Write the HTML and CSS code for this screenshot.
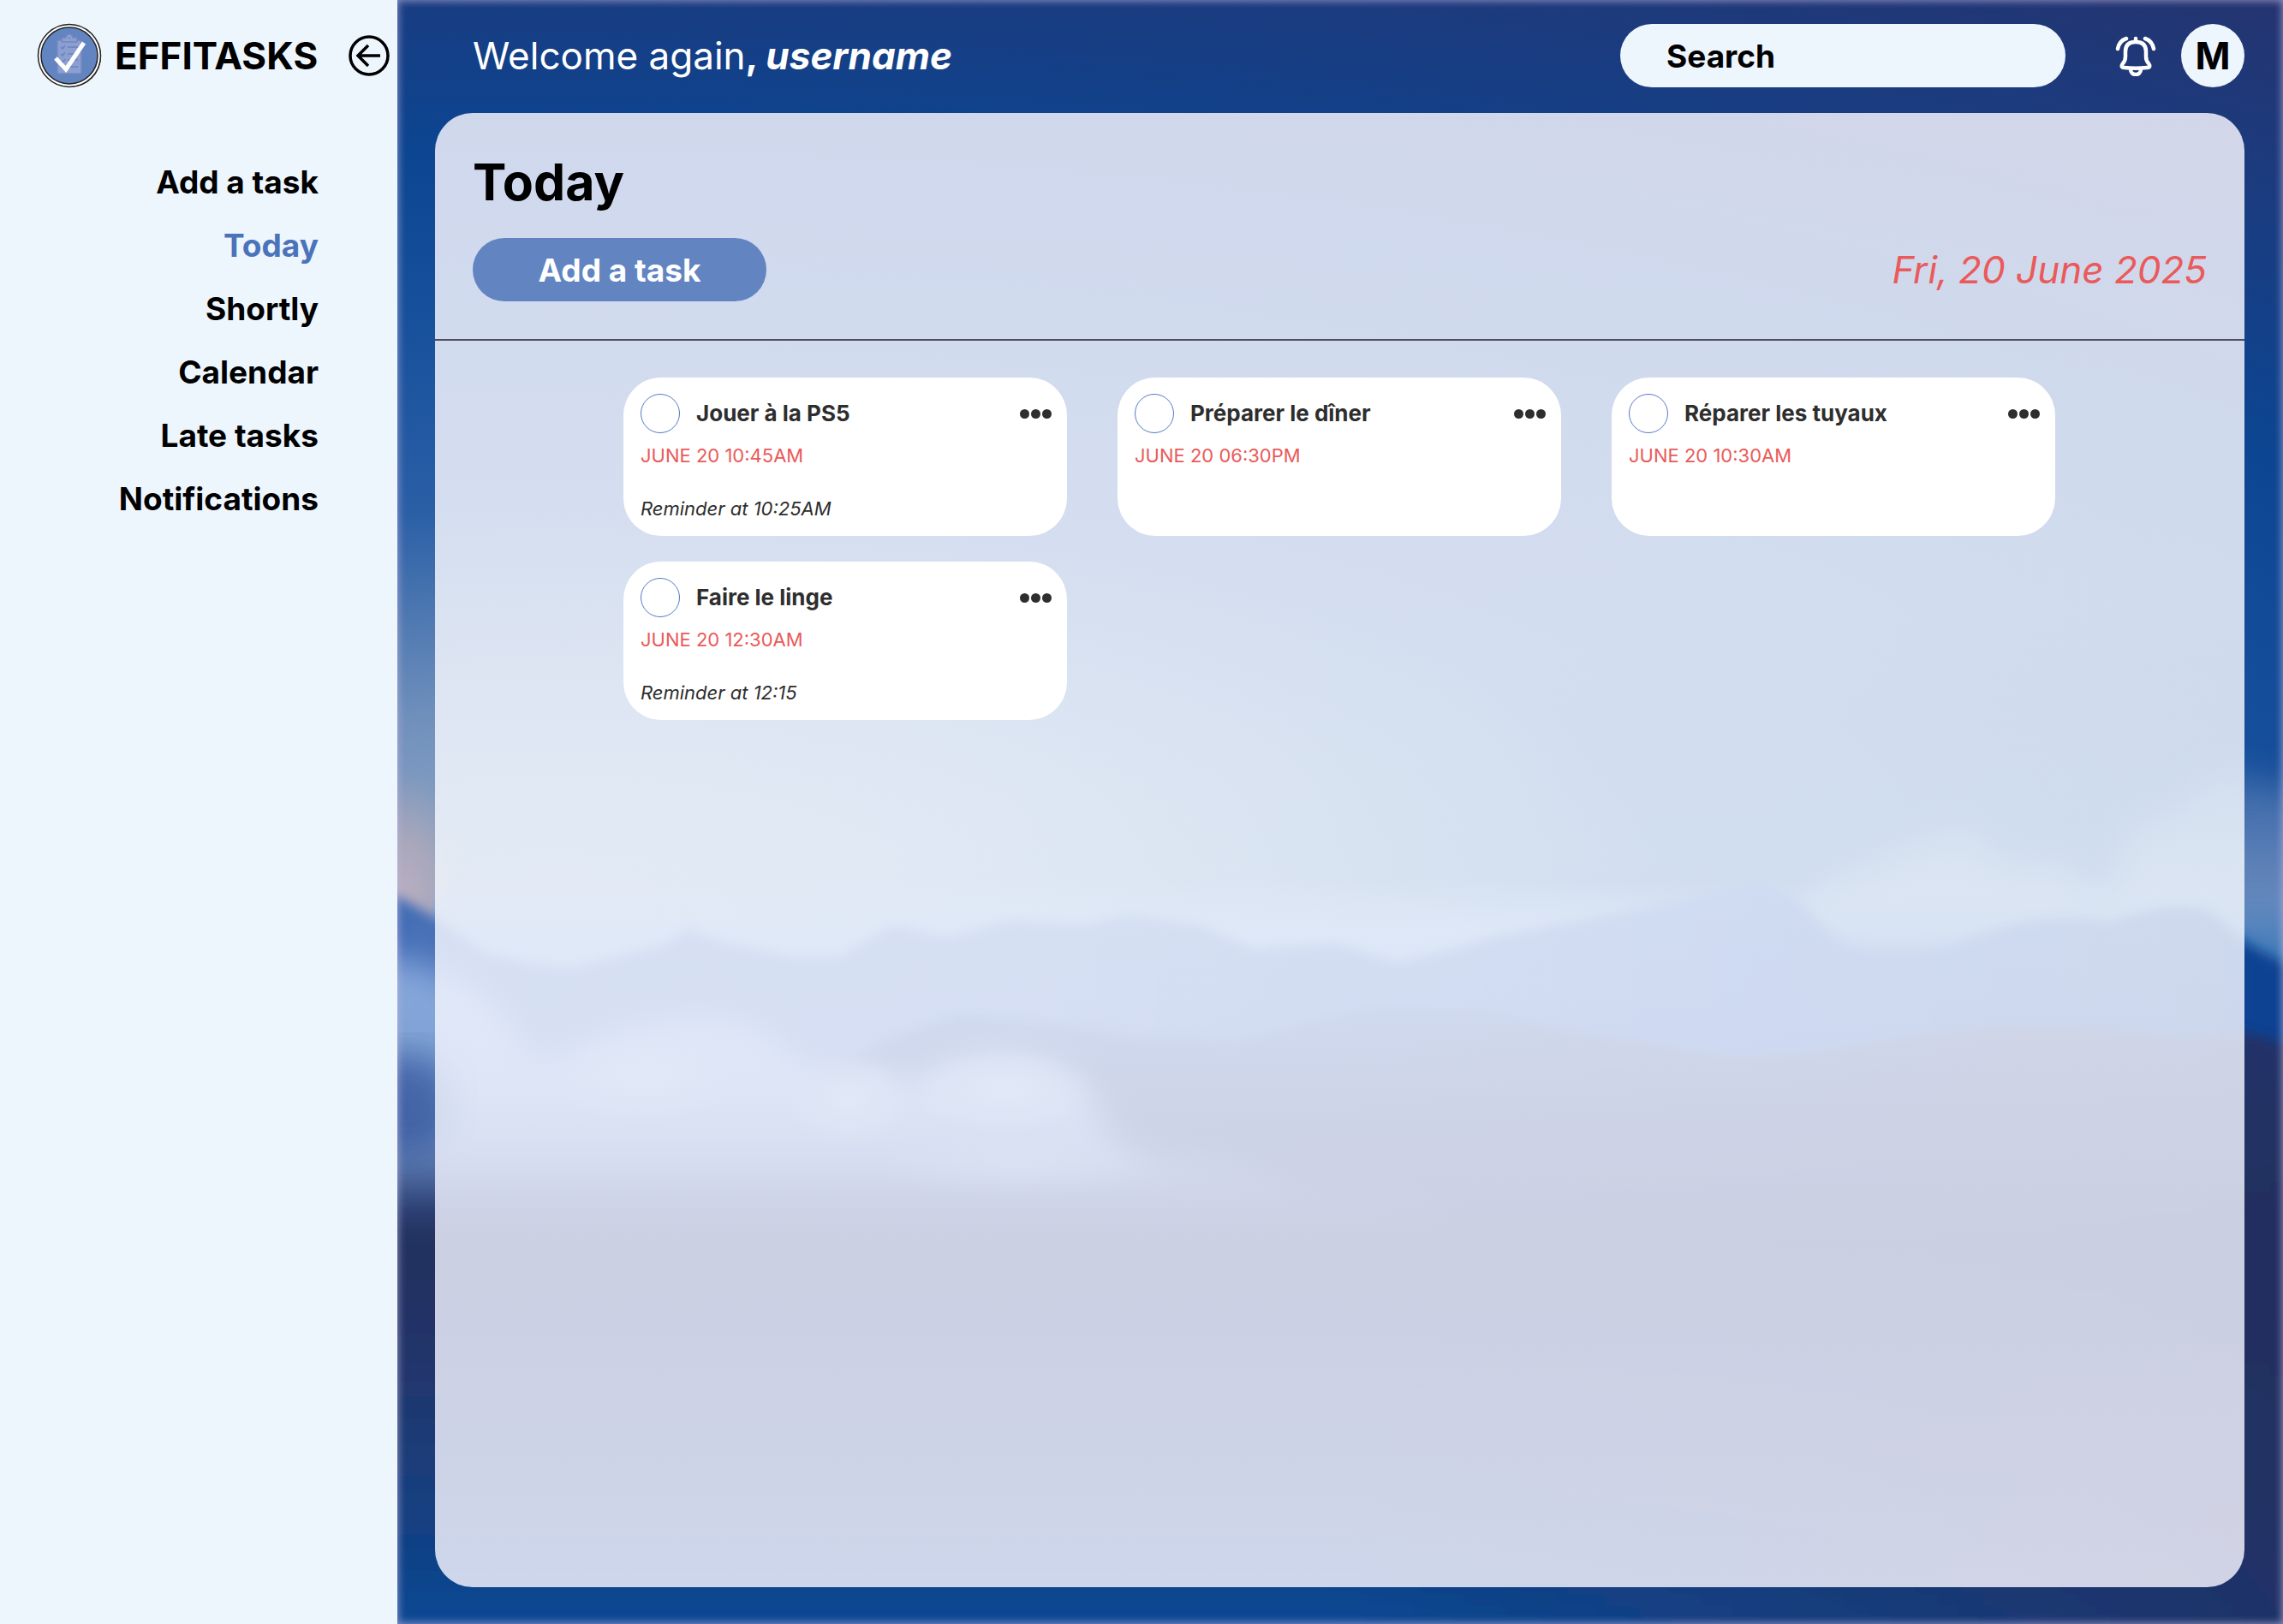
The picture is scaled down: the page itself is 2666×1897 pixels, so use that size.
FILE: index.html
```html
<!DOCTYPE html>
<html lang="en">
<head>
<meta charset="utf-8">
<meta name="viewport" content="width=device-width, initial-scale=1">
<title>Effitasks – Today</title>
<link rel="stylesheet" href="styles.css">
</head>
<body>
<aside class="sidebar">
  <div class="brand">
    <svg class="brand-logo" viewBox="0 0 76 76" aria-hidden="true">
      <circle cx="39" cy="39" r="36" fill="#222"/>
      <circle cx="38" cy="38" r="36.500" fill="#fff" stroke="#222" stroke-width="1.500"/>
      <circle cx="38" cy="38" r="33" fill="#6285c2" stroke="#222" stroke-width="1.500"/>
      <g fill="#8c9fd3" stroke="#7488bd" stroke-width="1.500" stroke-linejoin="round">
        <rect x="24" y="20" width="28" height="39" rx="1"/>
        <path d="M29 22v-4q0-1 1-1h4q1-4 4-4t4 4h4q1 0 1 1v4z"/>
      </g>
      <path d="M28 28l2 2 3-4M28 36l2 2 3-4M28 44l2 2 3-4M28 51l2 2 3-4M36 28h12M36 36h12M36 43h12M36 51h12" fill="none" stroke="#6f83b8" stroke-width="1.500"/>
      <circle cx="38" cy="17.500" r="1" fill="#6f83b8"/>
      <path d="M22 41L34 54L55 23" fill="none" stroke="#fff" stroke-width="5"/>
    </svg>
    <span class="brand-name">EFFITASKS</span>
    <button class="collapse" type="button" aria-label="Collapse menu">
      <svg viewBox="0 0 48 48" fill="none" stroke="#000" stroke-width="3.500" aria-hidden="true">
        <circle cx="24" cy="24" r="22"/>
        <path d="M37 24H11M23 12L11 24l12 12"/>
      </svg>
    </button>
  </div>
  <nav class="nav">
    <a href="#add">Add a task</a>
    <a class="active" href="#today" aria-current="page">Today</a>
    <a href="#shortly">Shortly</a>
    <a href="#calendar">Calendar</a>
    <a href="#late">Late tasks</a>
    <a href="#notifications">Notifications</a>
  </nav>
</aside>

<main class="main">
  <svg class="scene" viewBox="464 0 2202 1897" preserveAspectRatio="none" aria-hidden="true">
    <defs>
      <radialGradient id="sky" gradientUnits="userSpaceOnUse" cx="0" cy="0" r="1400" gradientTransform="translate(650 1070) scale(2.8 1)">
        <stop offset="0" stop-color="#93a8c8"/>
        <stop offset=".06" stop-color="#8ba3c4"/>
        <stop offset=".17" stop-color="#7090bc"/>
        <stop offset=".34" stop-color="#2a5fa6"/>
        <stop offset=".5" stop-color="#17509c"/>
        <stop offset=".64" stop-color="#0c4591"/>
        <stop offset=".78" stop-color="#1a3c80"/>
        <stop offset="1" stop-color="#2a3068"/>
      </radialGradient>
      <radialGradient id="glow">
        <stop offset="0" stop-color="#bcb0c2"/>
        <stop offset=".5" stop-color="#b3a9b8" stop-opacity=".7"/>
        <stop offset="1" stop-color="#a8a4b4" stop-opacity="0"/>
      </radialGradient>
      <linearGradient id="haze" x1="0" y1="0" x2="0" y2="1">
        <stop offset="0" stop-color="#8fb0e0" stop-opacity="0"/>
        <stop offset=".45" stop-color="#84a6dc" stop-opacity=".75"/>
        <stop offset="1" stop-color="#6a9fd2"/>
      </linearGradient>
      <linearGradient id="far" x1="0" y1="0" x2="1" y2="0">
        <stop offset="0" stop-color="#436db5"/>
        <stop offset=".06" stop-color="#4a72b8"/>
        <stop offset=".35" stop-color="#446db6"/>
        <stop offset=".7" stop-color="#1f52b0"/>
        <stop offset="1" stop-color="#0f4190"/>
      </linearGradient>
      <linearGradient id="near" gradientUnits="userSpaceOnUse" x1="0" y1="1180" x2="0" y2="1897">
        <stop offset="0" stop-color="#214d9c"/>
        <stop offset=".17" stop-color="#203c7c"/>
        <stop offset=".38" stop-color="#22305d"/>
        <stop offset=".56" stop-color="#22346a"/>
        <stop offset=".74" stop-color="#1b3d79"/>
        <stop offset=".87" stop-color="#104185"/>
        <stop offset="1" stop-color="#0a4894"/>
      </linearGradient>
      <linearGradient id="shade" x1="0" y1="0" x2="1" y2="0">
        <stop offset=".5" stop-color="#242e5e" stop-opacity="0"/>
        <stop offset="1" stop-color="#242e5e" stop-opacity=".85"/>
      </linearGradient>
      <linearGradient id="cloud" gradientUnits="userSpaceOnUse" x1="0" y1="1110" x2="0" y2="1435">
        <stop offset="0" stop-color="#8aa9de"/>
        <stop offset=".5" stop-color="#7b9fd0"/>
        <stop offset=".76" stop-color="#6686ba" stop-opacity=".9"/>
        <stop offset="1" stop-color="#3c5590" stop-opacity="0"/>
      </linearGradient>
      <linearGradient id="cloudRight" gradientUnits="userSpaceOnUse" x1="0" y1="900" x2="0" y2="1120">
        <stop offset="0" stop-color="#5a7eb6" stop-opacity=".5"/>
        <stop offset=".6" stop-color="#7391c0" stop-opacity=".85"/>
        <stop offset="1" stop-color="#3a78b8"/>
      </linearGradient>
      <filter id="soft"><feGaussianBlur stdDeviation="7"/></filter>
      <filter id="softer" x="-20%" y="-20%" width="140%" height="140%"><feGaussianBlur stdDeviation="20"/></filter>
      <radialGradient id="puff">
        <stop offset="0" stop-color="#9abbd8" stop-opacity=".8"/>
        <stop offset="1" stop-color="#9abbd8" stop-opacity="0"/>
      </radialGradient>
    </defs>
    <rect x="464" width="2202" height="1897" fill="url(#sky)"/>
    <ellipse cx="470" cy="1050" rx="80" ry="150" fill="url(#glow)"/>
    <rect x="504" y="1030" width="2162" height="120" fill="url(#haze)"/>
    <path filter="url(#softer)" fill="url(#cloudRight)" d="M2080 1120L2110 1050Q2150 1010 2190 1015Q2220 970 2260 985Q2290 940 2320 990Q2350 1020 2380 1005Q2430 1010 2450 1050Q2470 1030 2480 980Q2510 950 2540 950Q2580 890 2640 910L2700 930V1150H2080Z"/>
    <path filter="url(#soft)" fill="url(#far)" d="M440 1040L466 1048L508 1071L566 1113Q620 1128 670 1131L779 1102L802 1084L842 1100L928 1118L980 1118L1043 1080L1106 1095L1180 1075L1267 1080L1318 1068L1400 1080L1462 1108L1560 1102L1632 1124L1700 1108L1751 1093L1910 1063L2021 1036Q2065 1022 2098 1050L2142 1093Q2160 1108 2200 1108L2270 1106L2352 1080Q2418 1066 2463 1078Q2550 1046 2590 1070Q2610 1100 2666 1123L2700 1130V1500H440Z"/>
    <g filter="url(#soft)">
      <path fill="url(#near)" d="M440 1290L900 1280L1037 1215L1123 1186L1220 1196L1335 1212L1450 1216L1530 1195L1600 1180L1734 1182L1800 1196L1910 1213L2021 1235L2110 1230L2198 1216L2336 1195L2463 1203L2557 1215L2628 1206L2700 1230V1930H440Z"/>
      <path fill="url(#shade)" d="M440 1290L900 1280L1037 1215L1123 1186L1220 1196L1335 1212L1450 1216L1530 1195L1600 1180L1734 1182L1800 1196L1910 1213L2021 1235L2110 1230L2198 1216L2336 1195L2463 1203L2557 1215L2628 1206L2700 1230V1930H440Z"/>
    </g>
    <path filter="url(#softer)" fill="url(#cloud)" d="M400 1110Q500 1120 550 1155Q600 1190 630 1240Q700 1200 760 1195Q830 1175 900 1205Q940 1240 960 1250Q1010 1230 1060 1262Q1120 1225 1180 1230Q1260 1240 1290 1310Q1310 1355 1380 1355Q1460 1365 1520 1385Q1640 1390 1780 1440H400Z"/>
    <ellipse cx="474" cy="1290" rx="60" ry="60" fill="#2f5098" fill-opacity=".7" filter="url(#softer)"/>
    <ellipse cx="750" cy="1260" rx="110" ry="50" fill="url(#puff)"/>
    <ellipse cx="990" cy="1285" rx="70" ry="55" fill="url(#puff)"/>
    <ellipse cx="1175" cy="1275" rx="110" ry="50" fill="url(#puff)"/>
    <ellipse cx="1190" cy="1360" rx="170" ry="40" fill="url(#puff)" opacity=".5"/>
  </svg>

  <header class="topbar">
    <p class="welcome">Welcome again<b>, <i>username</i></b></p>
    <input class="search" type="search" placeholder="Search" aria-label="Search">
    <button class="bell" type="button" aria-label="Notifications">
      <svg viewBox="0 0 48 48" fill="none" stroke="#fff" stroke-width="4.500" stroke-linecap="round" stroke-linejoin="round" aria-hidden="true">
        <path d="M24 4v3M24 8c-8 0-12 4-12 11v6c0 4-1 6-3 8-2 3-2 5 2 5 8 1 18 1 26 0 4 0 4-2 2-5-2-2-3-4-3-8v-6c0-7-4-11-12-11z"/>
        <path d="M18 40c0 4 3 6 6 6s6-2 6-6M13 4C7 6 4 11 3 16M35 4c6 2 9 7 10 12"/>
      </svg>
    </button>
    <button class="avatar" type="button" aria-label="Account">M</button>
  </header>

  <section class="panel">
    <div class="panel-head">
      <h1>Today</h1>
      <div class="panel-row">
        <button class="add" type="button">Add a task</button>
        <time class="date" datetime="2025-06-20">Fri, 20 June 2025</time>
      </div>
    </div>
    <div class="cards">
      <article class="card">
        <div class="card-top">
          <input type="checkbox" id="t1"><label for="t1">Jouer à la PS5</label>
          <button class="more" type="button" aria-label="More options"><span></span><span></span><span></span></button>
        </div>
        <p class="due">JUNE 20 10:45AM</p>
        <p class="reminder">Reminder at 10:25AM</p>
      </article>
      <article class="card">
        <div class="card-top">
          <input type="checkbox" id="t2"><label for="t2">Préparer le dîner</label>
          <button class="more" type="button" aria-label="More options"><span></span><span></span><span></span></button>
        </div>
        <p class="due">JUNE 20 06:30PM</p>
      </article>
      <article class="card">
        <div class="card-top">
          <input type="checkbox" id="t3"><label for="t3">Réparer les tuyaux</label>
          <button class="more" type="button" aria-label="More options"><span></span><span></span><span></span></button>
        </div>
        <p class="due">JUNE 20 10:30AM</p>
      </article>
      <article class="card">
        <div class="card-top">
          <input type="checkbox" id="t4"><label for="t4">Faire le linge</label>
          <button class="more" type="button" aria-label="More options"><span></span><span></span><span></span></button>
        </div>
        <p class="due">JUNE 20 12:30AM</p>
        <p class="reminder">Reminder at 12:15</p>
      </article>
    </div>
  </section>
</main>
</body>
</html>
```
FILE: styles.css
```css
* { box-sizing: border-box; margin: 0; }

body {
  display: grid;
  grid-template-columns: 464px 1fr;
  min-height: 100vh;
  font-family: Inter, "Liberation Sans", sans-serif;
  font-size: 37px;
  color: #000;
  background: #edf5fd;
}

button, input { font: inherit; color: inherit; border: 0; padding: 0; background: none; }
button { cursor: pointer; }
svg { display: block; }
a { color: inherit; text-decoration: none; }

/* Sidebar */
.sidebar { padding-top: 28px; background: #edf5fd; }
.brand { display: flex; align-items: center; height: 74px; padding: 0 9px 0 43px; }
.brand-logo { width: 76px; height: 76px; overflow: visible; flex: none; }
.brand-name { margin-left: 15px; font-size: 44px; font-weight: 700; }
.collapse { width: 48px; height: 48px; margin-left: auto; }
.nav {
  display: flex;
  flex-direction: column;
  margin-top: 74px;
  padding-right: 92px;
  text-align: right;
  font-weight: 700;
  line-height: 74px;
}
.nav .active { color: #4b73b9; }

/* Main area with the landscape behind it */
.main { position: relative; display: flex; flex-direction: column; padding: 28px 45px 43px 44px; isolation: isolate; }
.scene { position: absolute; inset: 0; width: 100%; height: 100%; z-index: -2; }
.main::before {
  content: "";
  position: absolute;
  inset: 0;
  z-index: -1;
  box-shadow: inset 0 0 10px 1px rgba(190, 180, 220, .7);
}

.topbar { display: flex; align-items: center; height: 74px; padding-left: 44px; }
.welcome { font-size: 44px; color: #fff; margin-right: auto; }
.search {
  width: 520px;
  height: 74px;
  padding: 0 54px;
  border-radius: 37px;
  font-weight: 700;
  background: #edf5fd;
  appearance: none;
}
.search::placeholder { color: #000; opacity: 1; }
.bell { width: 48px; height: 48px; margin: 0 29px 0 58px; }
.avatar { width: 74px; height: 74px; border-radius: 50%; font-size: 44px; font-weight: 700; background: #edf5fd; }

/* Task panel */
.panel {
  flex: 1;
  margin-top: 30px;
  border-radius: 44px;
  background: linear-gradient(
    rgba(247, 246, 255, .83) 0%,
    rgba(247, 248, 255, .83) 30%,
    rgba(243, 248, 254, .83) 50%,
    rgba(243, 246, 255, .83) 60%,
    rgba(238, 240, 253, .83) 74%,
    rgba(238, 240, 253, .83) 82%,
    rgba(245, 244, 254, .83) 100%
  );
}
.panel-head { padding: 44px; border-bottom: 2px solid #4e4f60; }
h1 { font-size: 59px; line-height: 74px; font-weight: 700; }
.panel-row { display: flex; align-items: center; justify-content: space-between; margin-top: 28px; }
.add { width: 343px; height: 74px; border-radius: 37px; font-weight: 700; color: #fff; background: #6285c2; }
.date { font-size: 44px; font-style: italic; color: #ea5a5a; }

.cards {
  display: grid;
  grid-template-columns: repeat(auto-fill, 518px);
  justify-content: center;
  gap: 30px 59px;
  padding: 43px 161px 43px 160px;
}
.card {
  display: flex;
  flex-direction: column;
  min-height: 185px;
  padding: 19px 18px 14px 20px;
  border-radius: 44px;
  background: #fff;
  color: #2e2e2e;
  font-size: 22px;
  line-height: 36px;
}
.card-top { display: flex; align-items: center; height: 46px; font-size: 26px; font-weight: 700; }
.card-top input { appearance: none; width: 46px; height: 46px; border: 1px solid #5478c6; border-radius: 50%; }
.card-top label { margin-left: 19px; }
.more { display: flex; gap: 2px; margin-left: auto; }
.more span { width: 11px; height: 11px; border-radius: 50%; background: #2e2e2e; }
.due { margin-top: 8px; color: #ea5a5a; }
.reminder { margin-top: auto; font-style: italic; }
```
